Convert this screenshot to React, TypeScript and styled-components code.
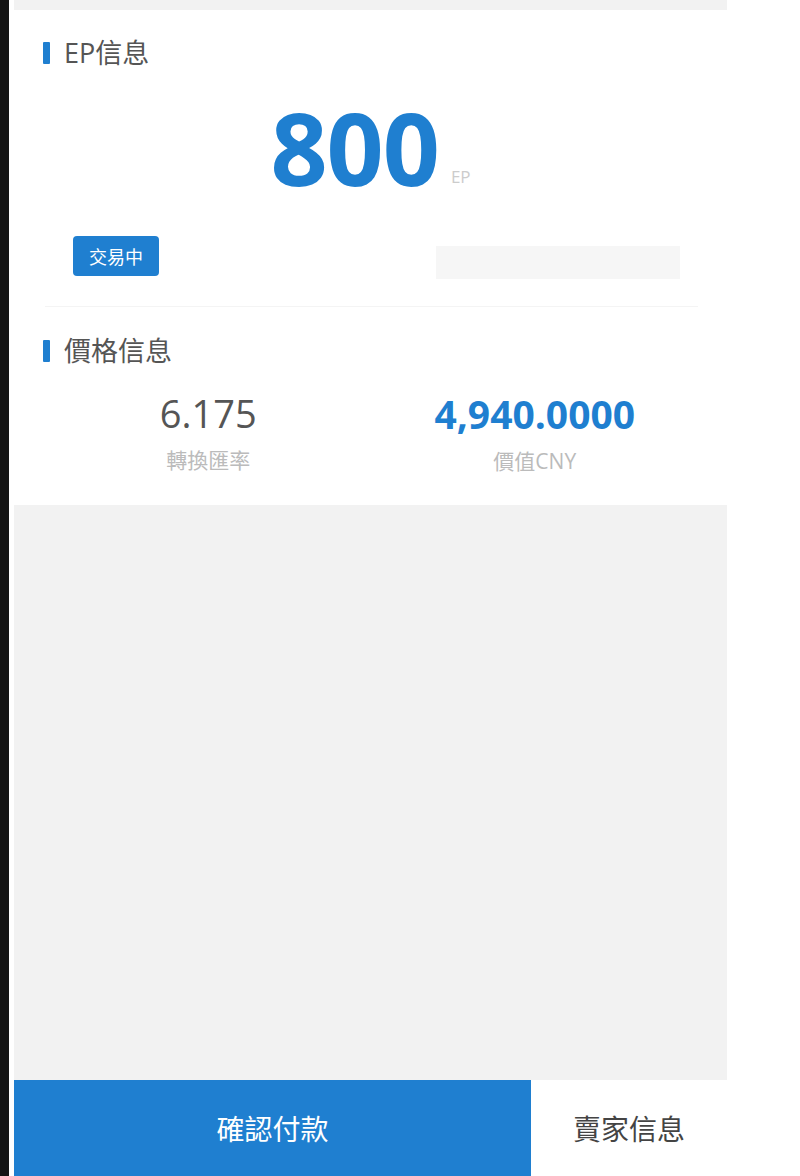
import styled, { createGlobalStyle } from 'styled-components';

const GlobalStyle = createGlobalStyle`
  * { box-sizing: border-box; }
  html, body { margin: 0; padding: 0; background: #ffffff; }
  body {
    font-family: "Open Sans", "Noto Sans CJK TC", sans-serif;
    -webkit-font-smoothing: antialiased;
  }
`;

const BLUE = '#1f7fd0';

const Frame = styled.div`
  display: flex;
  height: 1176px;
  width: 800px;
  overflow: hidden;
`;

const EdgeBar = styled.div`
  width: 9px;
  background: #151515;
  flex-shrink: 0;
  margin-right: 5px;
`;

const Screen = styled.div`
  width: 713px;
  display: flex;
  flex-direction: column;
  background: #f2f2f2;
`;

const TopStrip = styled.div`
  height: 10px;
  background: #f2f2f2;
`;

const Card = styled.section`
  background: #ffffff;
  padding: 30px 29px 31px 29px;
`;

const SectionTitle = styled.h3`
  display: flex;
  align-items: center;
  gap: 14px;
  margin: 0;
  height: 26px;
  font-size: 27px;
  font-weight: 400;
  color: #555555;
  line-height: 26px;

  &::before {
    content: '';
    display: block;
    width: 7px;
    height: 22px;
    background: ${BLUE};
    border-radius: 1px;
  }
`;

const AmountRow = styled.div`
  display: flex;
  justify-content: center;
  align-items: baseline;
  gap: 12px;
  margin-top: 31px;
`;

const Amount = styled.span`
  font-size: 100px;
  line-height: 1;
  font-weight: 700;
  color: ${BLUE};
  letter-spacing: -1px;
`;

const Unit = styled.span`
  font-size: 17px;
  color: #cccccc;
  position: relative;
  top: -3px;
`;

const StatusRow = styled.div`
  display: flex;
  justify-content: space-between;
  align-items: center;
  margin-top: 35px;
  padding: 0 18px 0 30px;
`;

const Badge = styled.span`
  display: inline-flex;
  align-items: center;
  justify-content: center;
  height: 40px;
  padding: 0 16px;
  border-radius: 4px;
  background: ${BLUE};
  color: #ffffff;
  font-size: 18px;
`;

const Ghost = styled.div`
  width: 244px;
  height: 33px;
  margin-top: 14px;
  background: #f6f6f6;
`;

const Divider = styled.hr`
  border: none;
  height: 1px;
  background: #f4f4f4;
  margin: 27px 0 31px 2px;
`;

const PriceGrid = styled.div`
  display: grid;
  grid-template-columns: 1fr 1fr;
  margin: 30px 0 0 2px;
`;

const PriceCell = styled.div`
  display: flex;
  flex-direction: column;
  align-items: center;
`;

const PriceValue = styled.span<{ $accent?: boolean }>`
  font-size: ${({ $accent }) => ($accent ? '39px' : '38px')};
  line-height: 1;
  font-weight: ${({ $accent }) => ($accent ? 700 : 400)};
  color: ${({ $accent }) => ($accent ? BLUE : '#555555')};
`;

const PriceLabel = styled.span`
  margin-top: 15px;
  font-size: 21px;
  line-height: 26px;
  color: #bbbbbb;
`;

const Filler = styled.div`
  flex: 1;
  background: #f2f2f2;
`;

const ActionBar = styled.div`
  display: flex;
  height: 96px;
  background: #ffffff;
`;

const ActionButton = styled.button<{ $primary?: boolean }>`
  border: none;
  margin: 0;
  padding: 0;
  font-family: "Noto Sans CJK TC", sans-serif;
  font-size: 28px;
  cursor: pointer;
  flex: ${({ $primary }) => ($primary ? '0 0 517px' : '1')};
  background: ${({ $primary }) => ($primary ? BLUE : '#ffffff')};
  color: ${({ $primary }) => ($primary ? '#ffffff' : '#444444')};
`;

export default function App() {
  return (
    <>
      <GlobalStyle />
      <Frame>
        <EdgeBar />
        <Screen>
          <TopStrip />
          <Card>
            <SectionTitle>EP信息</SectionTitle>
            <AmountRow>
              <Amount>800</Amount>
              <Unit>EP</Unit>
            </AmountRow>
            <StatusRow>
              <Badge>交易中</Badge>
              <Ghost />
            </StatusRow>
            <Divider />
            <SectionTitle>價格信息</SectionTitle>
            <PriceGrid>
              <PriceCell>
                <PriceValue>6.175</PriceValue>
                <PriceLabel>轉換匯率</PriceLabel>
              </PriceCell>
              <PriceCell>
                <PriceValue $accent>4,940.0000</PriceValue>
                <PriceLabel>價值CNY</PriceLabel>
              </PriceCell>
            </PriceGrid>
          </Card>
          <Filler />
          <ActionBar>
            <ActionButton $primary>確認付款</ActionButton>
            <ActionButton>賣家信息</ActionButton>
          </ActionBar>
        </Screen>
      </Frame>
    </>
  );
}
